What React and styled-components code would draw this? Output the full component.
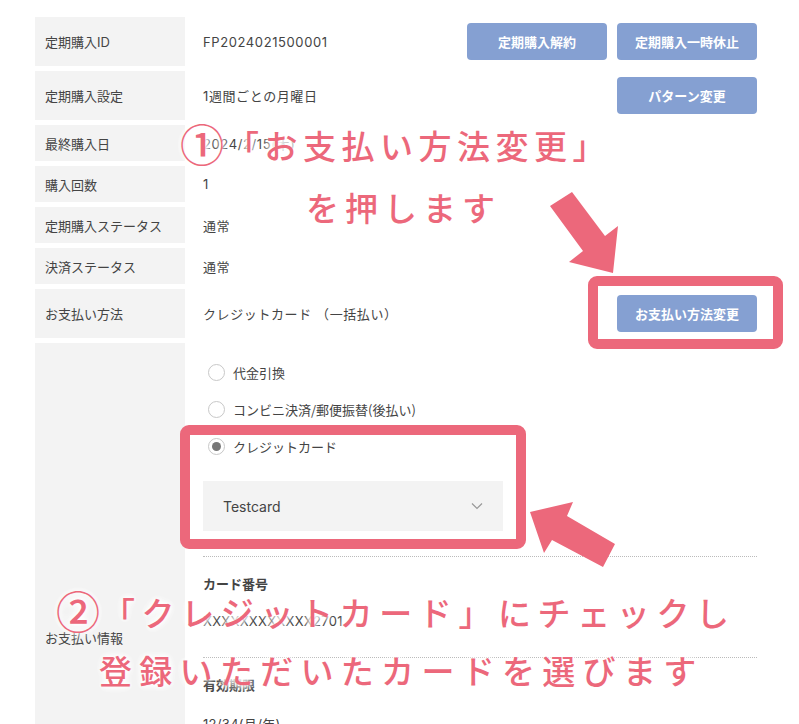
import React from "react";
import styled, { createGlobalStyle } from "styled-components";

const GlobalStyle = createGlobalStyle`
	body {
		margin: 0;
		background: #fff;
		font-family: "Inter", "Noto Sans CJK JP", sans-serif;
		color: #444;
	}
`;

const Page = styled.div`
	position: relative;
	padding: 17px 42px 0 35px;
`;

const Table = styled.div`
	display: flex;
	flex-direction: column;
	gap: 5px;
`;

const Row = styled.div`
	display: flex;
	min-height: ${(p) => p.$h || 36}px;
`;

const Label = styled.div`
	width: 150px;
	flex-shrink: 0;
	box-sizing: border-box;
	padding-left: 10px;
	background: #f3f3f3;
	display: flex;
	align-items: center;
	font-size: 13px;
	color: #444;
`;

const Value = styled.div`
	flex: 1;
	display: flex;
	align-items: center;
	justify-content: space-between;
	padding-left: 18px;
	font-size: 13px;
	letter-spacing: 0.6px;
	color: #444;
`;

const Stack = styled.div`
	flex: 1;
	display: flex;
	flex-direction: column;
	padding: 11px 0 0 18px;
	font-size: 13px;
	color: #444;
`;

const Buttons = styled.div`
	display: flex;
	gap: 10px;
`;

const Button = styled.button`
	width: 140px;
	height: 37px;
	border: none;
	border-radius: 4px;
	background: #85a0d2;
	color: #fff;
	font-family: "Noto Sans CJK JP", sans-serif;
	font-weight: 700;
	font-size: 13px;
	letter-spacing: 0;
	cursor: pointer;
`;

const RadioRow = styled.label`
	display: flex;
	align-items: center;
	gap: 8px;
	height: 37px;
	padding-left: 5px;
	font-family: "Noto Sans CJK JP", sans-serif;
`;

const Radio = styled.input`
	appearance: none;
	margin: 0;
	width: 17px;
	height: 17px;
	border: 1px solid #c8c8c8;
	border-radius: 50%;
	background: #fff;
	box-sizing: border-box;
	display: grid;
	place-items: center;

	&:checked::after {
		content: "";
		width: 9px;
		height: 9px;
		border-radius: 50%;
		background: #777;
	}
`;

const Select = styled.div`
	width: 300px;
	height: 50px;
	margin-top: 16px;
	box-sizing: border-box;
	padding: 0 20px;
	background: #f3f3f3;
	display: flex;
	align-items: center;
	justify-content: space-between;
	font-size: 14px;
	color: #444;
`;

const Divider = styled.hr`
	border: none;
	border-top: 1px dotted #bbb;
	margin: ${(p) => p.$top || 25}px 0 0;
	width: 100%;
`;

const FieldTitle = styled.div`
	font-family: "Noto Sans CJK JP", sans-serif;
	font-weight: 700;
	font-size: 13px;
	margin-top: 17px;
`;

const FieldValue = styled.div`
	font-size: 13px;
	margin-top: 20px;
	letter-spacing: 0.3px;
`;

const Highlight = styled.div`
	position: absolute;
	left: ${(p) => p.$x}px;
	top: ${(p) => p.$y}px;
	width: ${(p) => p.$w}px;
	height: ${(p) => p.$h}px;
	box-sizing: border-box;
	border: 10px solid #ec687b;
	border-radius: 9px;
	pointer-events: none;
`;

const Note = styled.div`
	position: absolute;
	left: ${(p) => p.$x}px;
	top: ${(p) => p.$y}px;
	font-family: "Noto Sans CJK JP", sans-serif;
	font-weight: 500;
	font-size: 33px;
	line-height: 40px;
	letter-spacing: ${(p) => p.$ls || 6}px;
	white-space: nowrap;
	color: #ec687b;
	text-shadow: 0 0 4px #fff, 0 0 6px #fff, 0 0 8px #fff, 0 0 10px #fff;
	pointer-events: none;
`;

const Circled = styled.span`
	font-size: 44px;
	line-height: 0;
	vertical-align: -3px;
	letter-spacing: 2px;
`;

const Arrows = styled.svg`
	position: absolute;
	left: 0;
	top: 0;
	pointer-events: none;
`;

const Chevron = () => (
	<svg width="12" height="8" viewBox="0 0 12 8">
		<path d="M1 1.5 L6 6.5 L11 1.5" fill="none" stroke="#999" strokeWidth="1.2" />
	</svg>
);

export default function App() {
	return (
		<>
			<GlobalStyle />
			<Page>
				<Table>
					<Row $h={49}>
						<Label>定期購入ID</Label>
						<Value>
							FP2024021500001
							<Buttons>
								<Button>定期購入解約</Button>
								<Button>定期購入一時休止</Button>
							</Buttons>
						</Value>
					</Row>
					<Row $h={49}>
						<Label>定期購入設定</Label>
						<Value>
							1週間ごとの月曜日
							<Button>パターン変更</Button>
						</Value>
					</Row>
					<Row>
						<Label>最終購入日</Label>
						<Value>2024/2/15(木)</Value>
					</Row>
					<Row>
						<Label>購入回数</Label>
						<Value>1</Value>
					</Row>
					<Row>
						<Label>定期購入ステータス</Label>
						<Value>通常</Value>
					</Row>
					<Row>
						<Label>決済ステータス</Label>
						<Value>通常</Value>
					</Row>
					<Row $h={49}>
						<Label>お支払い方法</Label>
						<Value>
							クレジットカード （一括払い）
							<Button>お支払い方法変更</Button>
						</Value>
					</Row>
					<Row $h={588}>
						<Label>お支払い情報</Label>
						<Stack>
							<RadioRow>
								<Radio type="radio" name="pay" />
								代金引換
							</RadioRow>
							<RadioRow>
								<Radio type="radio" name="pay" />
								コンビニ決済/郵便振替(後払い)
							</RadioRow>
							<RadioRow>
								<Radio type="radio" name="pay" defaultChecked />
								クレジットカード
							</RadioRow>
							<Select>
								Testcard
								<Chevron />
							</Select>
							<Divider />
							<FieldTitle>カード番号</FieldTitle>
							<FieldValue>XXXXXXXXXXXX2701</FieldValue>
							<Divider $top={28} />
							<FieldTitle>有効期限</FieldTitle>
							<FieldValue>12/34(月/年)</FieldValue>
						</Stack>
					</Row>
				</Table>

				<Highlight $x={588} $y={276} $w={195} $h={73} />
				<Highlight $x={180} $y={425} $w={346} $h={124} />

				<Arrows width="799" height="724">
					<polygon
						points="550,206 572,192 605,236 618,226 613,273 569,262 583,251"
						fill="#ec687b"
					/>
					<polygon
						points="530,512 573,502 567,516 615,544 603,567 552,540 544,553"
						fill="#ec687b"
					/>
				</Arrows>

				<Note $x={180} $y={125} $ls={5.5}>
					<Circled>①</Circled>「お支払い方法変更」
				</Note>
				<Note $x={306} $y={187}>を押します</Note>
				<Note $x={56} $y={592} $ls={6.6}>
					<Circled>②</Circled>「クレジットカード」にチェックし
				</Note>
				<Note $x={99} $y={650} $ls={7.3}>登録いただいたカードを選びます</Note>
			</Page>
		</>
	);
}
